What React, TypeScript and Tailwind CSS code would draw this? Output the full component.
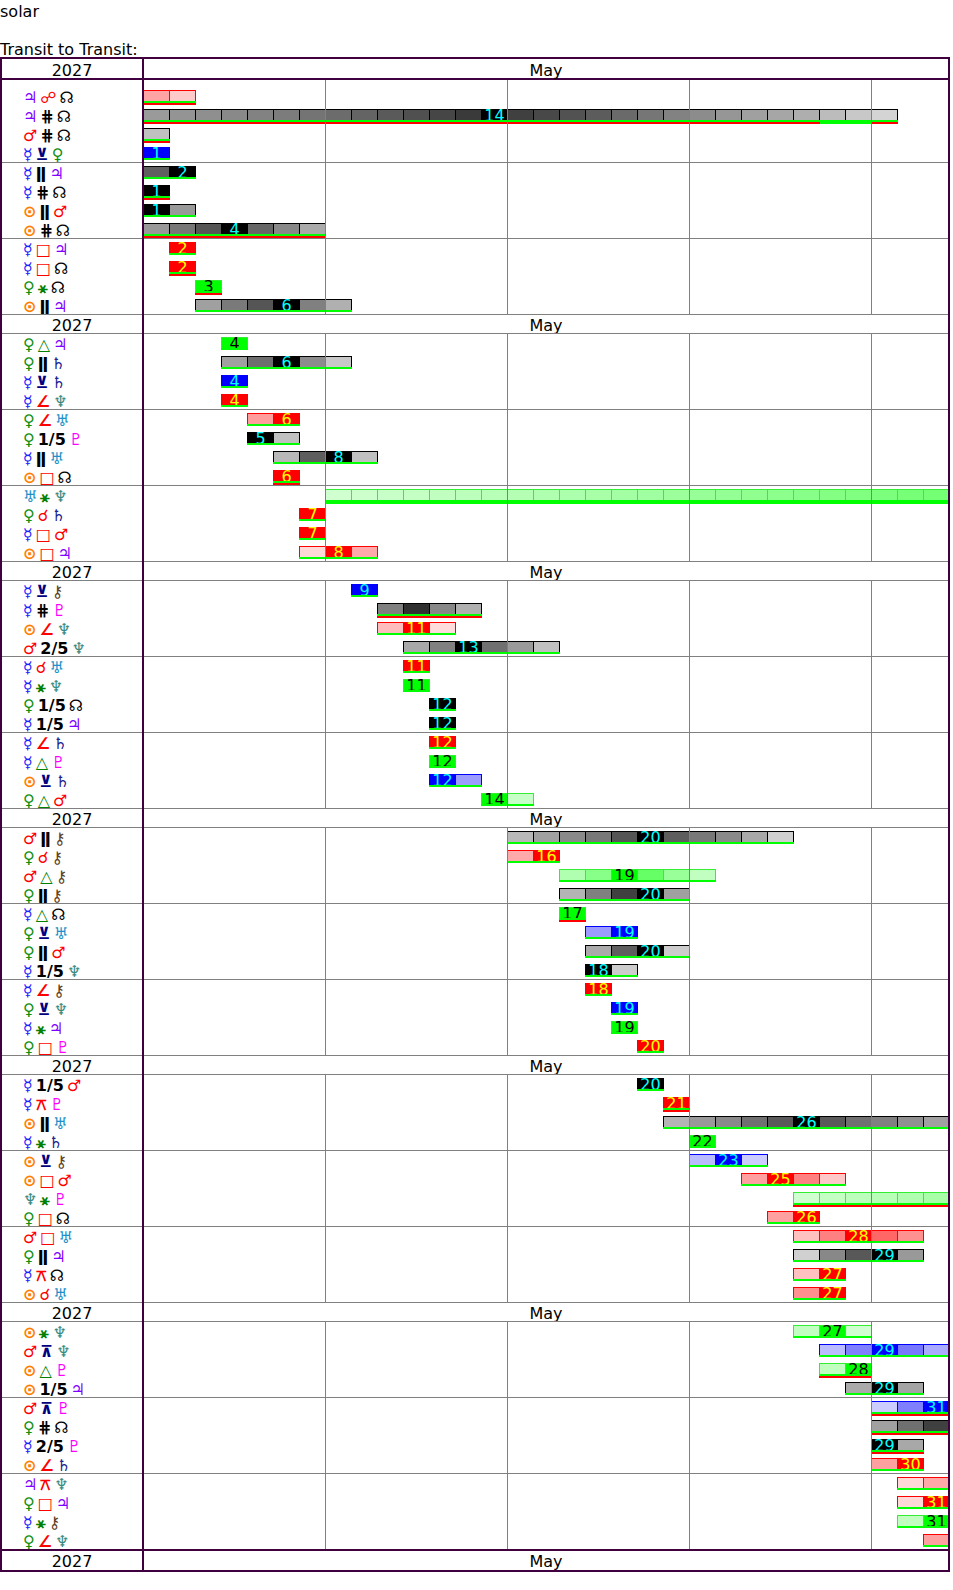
import React from "react"

// planet / aspect glyphs with their colours
const SYM: Record<string, [string, string]> = {
  J: ["♃", "text-[#8000ff]"],
  Ma: ["♂", "text-[#ff0000]"],
  Me: ["☿", "text-[#2020ff]"],
  V: ["♀", "text-[#109010]"],
  Su: ["⊙", "text-[#ff8000]"],
  Sa: ["♄", "text-[#202090]"],
  U: ["♅", "text-[#2090c8]"],
  N: ["♆", "text-[#3a8a80]"],
  P: ["♇", "text-[#ff00ff]"],
  Ch: ["⚷", "text-[#604020]"],
  No: ["☊", "text-black"],
  opp: ["☍", "text-[#ff0000]"],
  par: ["ǁ", "text-black"],
  cp: ["⋕", "text-black"],
  ssx: ["⊻", "text-[#000080]"],
  sq: ["□", "text-[#ff0000]"],
  sx: ["⚹", "text-[#008000]"],
  tri: ["△", "text-[#008000]"],
  ssq: ["∠", "text-[#ff0000]"],
  q: ["1/5", "text-black"],
  bq: ["2/5", "text-black"],
  conj: ["☌", "text-[#ff0000]"],
  qx: ["⚻", "text-[#ff0000]"],
  sesq: ["⊼", "text-[#000080]"],
}

type Row = [string, string, string, number, string, string, (string | string[])?]

const hex = (v: number) => {
  const h = Math.round(v).toString(16).padStart(2, "0")
  return h + h + h
}

// long contraparallel bar, peak on the 14th
const bar2 = [154, 148, 143, 137, 130, 124, 116, 108, 100, 90, 80, 70, 58]
  .map(hex)
  .concat(["*"])
  .concat([64, 72, 82, 92, 106, 118, 130, 140, 150, 160, 166, 174, 188, 200, 212].map(hex))
  .join(" ")
const bar2u = Array.from({ length: 29 }, (_, i) => (i === 26 || i === 27 ? "gg" : "gr"))

const green24 = Array.from({ length: 24 }, (_, i) => {
  const v = Math.round(208 - i * 4).toString(16).padStart(2, "0")
  return v + "ff" + v
}).join(" ")

const sections: Row[][][] = [
  [
    [
      ["J", "opp", "No", 1, "r", "ffa4a4 ffcaca", "gr"],
      ["J", "cp", "No", 1, "k", bar2, bar2u],
      ["Ma", "cp", "No", 1, "k", "c0c0c0", "gr"],
      ["Me", "ssx", "V", 1, "b", "*"],
    ],
    [
      ["Me", "par", "J", 1, "k", "606060 *"],
      ["Me", "cp", "No", 1, "k", "*", "gr"],
      ["Su", "par", "Ma", 1, "k", "* 999999"],
      ["Su", "cp", "No", 1, "k", "999999 777777 555555 * 666666 888888 aaaaaa", "gr"],
    ],
    [
      ["Me", "sq", "J", 2, "r", "*"],
      ["Me", "sq", "No", 2, "r", "*", "gr"],
      ["V", "sx", "No", 3, "g", "*", "gr"],
      ["Su", "par", "J", 3, "k", "a0a0a0 7a7a7a 555555 * 808080 b0b0b0"],
    ],
  ],
  [
    [
      ["V", "tri", "J", 4, "g", "*"],
      ["V", "par", "Sa", 4, "k", "a0a0a0 6e6e6e * 8c8c8c c8c8c8"],
      ["Me", "ssx", "Sa", 4, "b", "*"],
      ["Me", "ssq", "N", 4, "r", "*"],
    ],
    [
      ["V", "ssq", "U", 5, "r", "ff9c9c *"],
      ["V", "q", "P", 5, "k", "* c0c0c0"],
      ["Me", "par", "U", 6, "k", "b8b8b8 5e5e5e * c0c0c0"],
      ["Su", "sq", "No", 6, "r", "*", "gr"],
    ],
    [
      ["U", "sx", "N", 8, "g", green24, "gg"],
      ["V", "conj", "Sa", 7, "r", "*"],
      ["Me", "sq", "Ma", 7, "r", "*"],
      ["Su", "sq", "J", 7, "r", "ffd8d8 * ffaaaa"],
    ],
  ],
  [
    [
      ["Me", "ssx", "Ch", 9, "b", "*"],
      ["Me", "cp", "P", 10, "k", "808080 303030 888888 b0b0b0", "gr"],
      ["Su", "ssq", "N", 10, "r", "ffbcbc * ffdcdc"],
      ["Ma", "bq", "N", 11, "k", "a8a8a8 808080 * 707070 9a9a9a c0c0c0"],
    ],
    [
      ["Me", "conj", "U", 11, "r", "*"],
      ["Me", "sx", "N", 11, "g", "*"],
      ["V", "q", "No", 12, "k", "*"],
      ["Me", "q", "J", 12, "k", "*"],
    ],
    [
      ["Me", "ssq", "Sa", 12, "r", "*"],
      ["Me", "tri", "P", 12, "g", "*"],
      ["Su", "ssx", "Sa", 12, "b", "* 9c9cff"],
      ["V", "tri", "Ma", 14, "g", "* c8ffc8"],
    ],
  ],
  [
    [
      ["Ma", "par", "Ch", 15, "k", "b8b8b8 a0a0a0 8a8a8a 787878 555555 * 5e5e5e 787878 8a8a8a a8a8a8 d0d0d0"],
      ["V", "conj", "Ch", 15, "r", "ffaaaa *"],
      ["Ma", "tri", "Ch", 17, "g", "b0ffb0 88ff88 * 66ff66 99ff99 c0ffc0"],
      ["V", "par", "Ch", 17, "k", "b4b4b4 808080 404040 * a0a0a0"],
    ],
    [
      ["Me", "tri", "No", 17, "g", "*", "gr"],
      ["V", "ssx", "U", 18, "b", "9c9cff *"],
      ["V", "par", "Ma", 18, "k", "aaaaaa 5e5e5e * cccccc"],
      ["Me", "q", "N", 18, "k", "* cccccc"],
    ],
    [
      ["Me", "ssq", "Ch", 18, "r", "*"],
      ["V", "ssx", "N", 19, "b", "*"],
      ["Me", "sx", "J", 19, "g", "*"],
      ["V", "sq", "P", 20, "r", "*"],
    ],
  ],
  [
    [
      ["Me", "q", "Ma", 20, "k", "*"],
      ["Me", "qx", "P", 21, "r", "*", "gr"],
      ["Su", "par", "U", 21, "k", "b4b4b4 999999 8a8a8a 707070 5a5a5a * 5a5a5a 707070 808080 909090 a0a0a0"],
      ["Me", "sx", "Sa", 22, "g", "*"],
    ],
    [
      ["Su", "ssx", "Ch", 22, "b", "babaff * ccccff"],
      ["Su", "sq", "Ma", 24, "r", "ffa0a0 * ff8080 ffc8c8"],
      ["N", "sx", "P", 26, "g", "d0ffd0 c4ffc4 bcffbc b8ffb8 b0ffb0 a8ffa8", "gr"],
      ["V", "sq", "No", 25, "r", "ffa0a0 *"],
    ],
    [
      ["Ma", "sq", "U", 26, "r", "ffc0c0 ff8080 * ff6666 ff9090"],
      ["V", "par", "J", 26, "k", "d0d0d0 888888 585858 * 999999"],
      ["Me", "qx", "No", 26, "r", "ffc0c0 *"],
      ["Su", "conj", "U", 26, "r", "ff9090 *"],
    ],
  ],
  [
    [
      ["Su", "sx", "N", 26, "g", "c0ffc0 * d0ffd0"],
      ["Ma", "sesq", "N", 27, "b", "bbbbff 8080ff * 7878ff aaaaff"],
      ["Su", "tri", "P", 27, "g", "c0ffc0 *", "gr"],
      ["Su", "q", "J", 28, "k", "aaaaaa * a4a4a4"],
    ],
    [
      ["Ma", "sesq", "P", 29, "b", "ccccff 8080ff *", "gr"],
      ["V", "cp", "No", 29, "k", "a0a0a0 707070 404040", "gr"],
      ["Me", "bq", "P", 29, "k", "* a8a8a8", "gr"],
      ["Su", "ssq", "Sa", 29, "r", "ffa0a0 *"],
    ],
    [
      ["J", "qx", "N", 30, "r", "ffd8d8 ffa8a8"],
      ["V", "sq", "J", 30, "r", "ffd8d8 *"],
      ["Me", "sx", "Ch", 30, "g", "c0ffc0 *"],
      ["V", "ssq", "N", 31, "r", "ffa0a0"],
    ],
  ],
]

const BORDER: Record<string, string> = {
  k: "border-black",
  r: "border-[#ff0000]",
  g: "border-[#33ee33]",
  b: "border-[#0000ff]",
}
const PEAK: Record<string, string> = {
  k: "bg-black text-[#00ffff]",
  r: "bg-[#ff0000] text-[#ffff00]",
  g: "bg-[#00ff00] text-black",
  b: "bg-[#0000ff] text-[#00ffff]",
}

function Label({ row }: { row: Row }) {
  return (
    <div className="flex h-[15px] items-center gap-[3px] pl-[21px] text-[16px] font-bold leading-[15px]">
      {[row[0], row[1], row[2]].map((k, i) => (
        <span key={i} className={SYM[k][1]}>
          {SYM[k][0]}
        </span>
      ))}
    </div>
  )
}

function Bar({ row }: { row: Row }) {
  const [, , , start, type, cellStr, u = "g"] = row
  const cells = cellStr.split(" ")
  const under = Array.isArray(u) ? u : cells.map(() => u)
  const lineColor = (code: string, n: number) => {
    if (n === 1) return "#00ff00"
    if (code === "gr") return "#ff0000"
    if (code === "gg") return "#00ff00"
    return "transparent"
  }
  return (
    <div className="flex h-[15px] w-fit flex-col" style={{ marginLeft: 26 * (start - 1) - 1 }}>
      <div className={`flex h-[11px] w-fit border-t border-l ${BORDER[type]}`}>
        {cells.map((c, i) =>
          c === "*" ? (
            <div
              key={i}
              className={`h-full w-[26px] shrink-0 border-r text-center text-[16px] leading-[11px] ${BORDER[type]} ${PEAK[type]}`}
            >
              {start + i}
            </div>
          ) : (
            <div
              key={i}
              className={`h-full w-[26px] shrink-0 border-r ${BORDER[type]}`}
              style={{ backgroundColor: "#" + c }}
            />
          )
        )}
      </div>
      {[1, 2].map((n) => (
        <div key={n} className="flex h-[2px] w-fit">
          {under.map((code, i) => (
            <div
              key={i}
              className={`h-full shrink-0 ${i === 0 ? "w-[27px]" : "w-[26px]"}`}
              style={{ backgroundColor: lineColor(code, n) }}
            />
          ))}
        </div>
      ))}
    </div>
  )
}

function Group({ rows, first }: { rows: Row[]; first?: boolean }) {
  const inner = first
    ? "flex flex-col items-start gap-[4px] pt-[10px]"
    : "flex flex-col items-start gap-[4px] border-t border-[#808080] pt-[3px]"
  return (
    <div className="flex">
      <div className="w-[142px] shrink-0 border-r-2 border-[#400040]">
        <div className={inner}>
          {rows.map((r, i) => (
            <Label key={i} row={r} />
          ))}
        </div>
      </div>
      <div className="relative w-[804px] overflow-hidden">
        <div className={inner}>
          {rows.map((r, i) => (
            <Bar key={i} row={r} />
          ))}
        </div>
        <div className="pointer-events-none absolute inset-0 flex">
          {[0, 1, 2, 3].map((i) => (
            <div key={i} className="h-full w-[182px] shrink-0 border-r border-[#808080]" />
          ))}
        </div>
      </div>
    </div>
  )
}

function YearRow() {
  return (
    <div className="flex h-[19px]">
      <div className="w-[142px] shrink-0 border-r-2 border-[#400040]">
        <div className="h-[19px] border-t border-[#808080] pt-[3px] text-center leading-[16px]">2027</div>
      </div>
      <div className="w-[804px]">
        <div className="h-[19px] border-t border-[#808080] pt-[3px] text-center leading-[16px]">May</div>
      </div>
    </div>
  )
}

export default function App() {
  return (
    <div className="font-['DejaVu_Sans'] text-[16px] text-black">
      <div className="h-[40px] pt-[2px] leading-[19px]">solar</div>
      <div className="h-[17px] leading-[19px]">Transit to Transit:</div>
      <div className="w-[950px] border-2 border-[#400040]">
        <div className="flex h-[21px] border-b-2 border-[#400040]">
          <div className="w-[142px] shrink-0 border-r-2 border-[#400040] pt-[4px] text-center leading-[16px]">
            2027
          </div>
          <div className="w-[804px] pt-[4px] text-center leading-[16px]">May</div>
        </div>
        {sections.map((sec, si) => (
          <React.Fragment key={si}>
            {si > 0 && <YearRow />}
            {sec.map((g, gi) => (
              <Group key={gi} rows={g} first={si === 0 && gi === 0} />
            ))}
          </React.Fragment>
        ))}
        <div className="flex h-[21px] border-t-2 border-[#400040]">
          <div className="w-[142px] shrink-0 border-r-2 border-[#400040] pt-[3px] text-center leading-[16px]">
            2027
          </div>
          <div className="w-[804px] pt-[3px] text-center leading-[16px]">May</div>
        </div>
      </div>
    </div>
  )
}
